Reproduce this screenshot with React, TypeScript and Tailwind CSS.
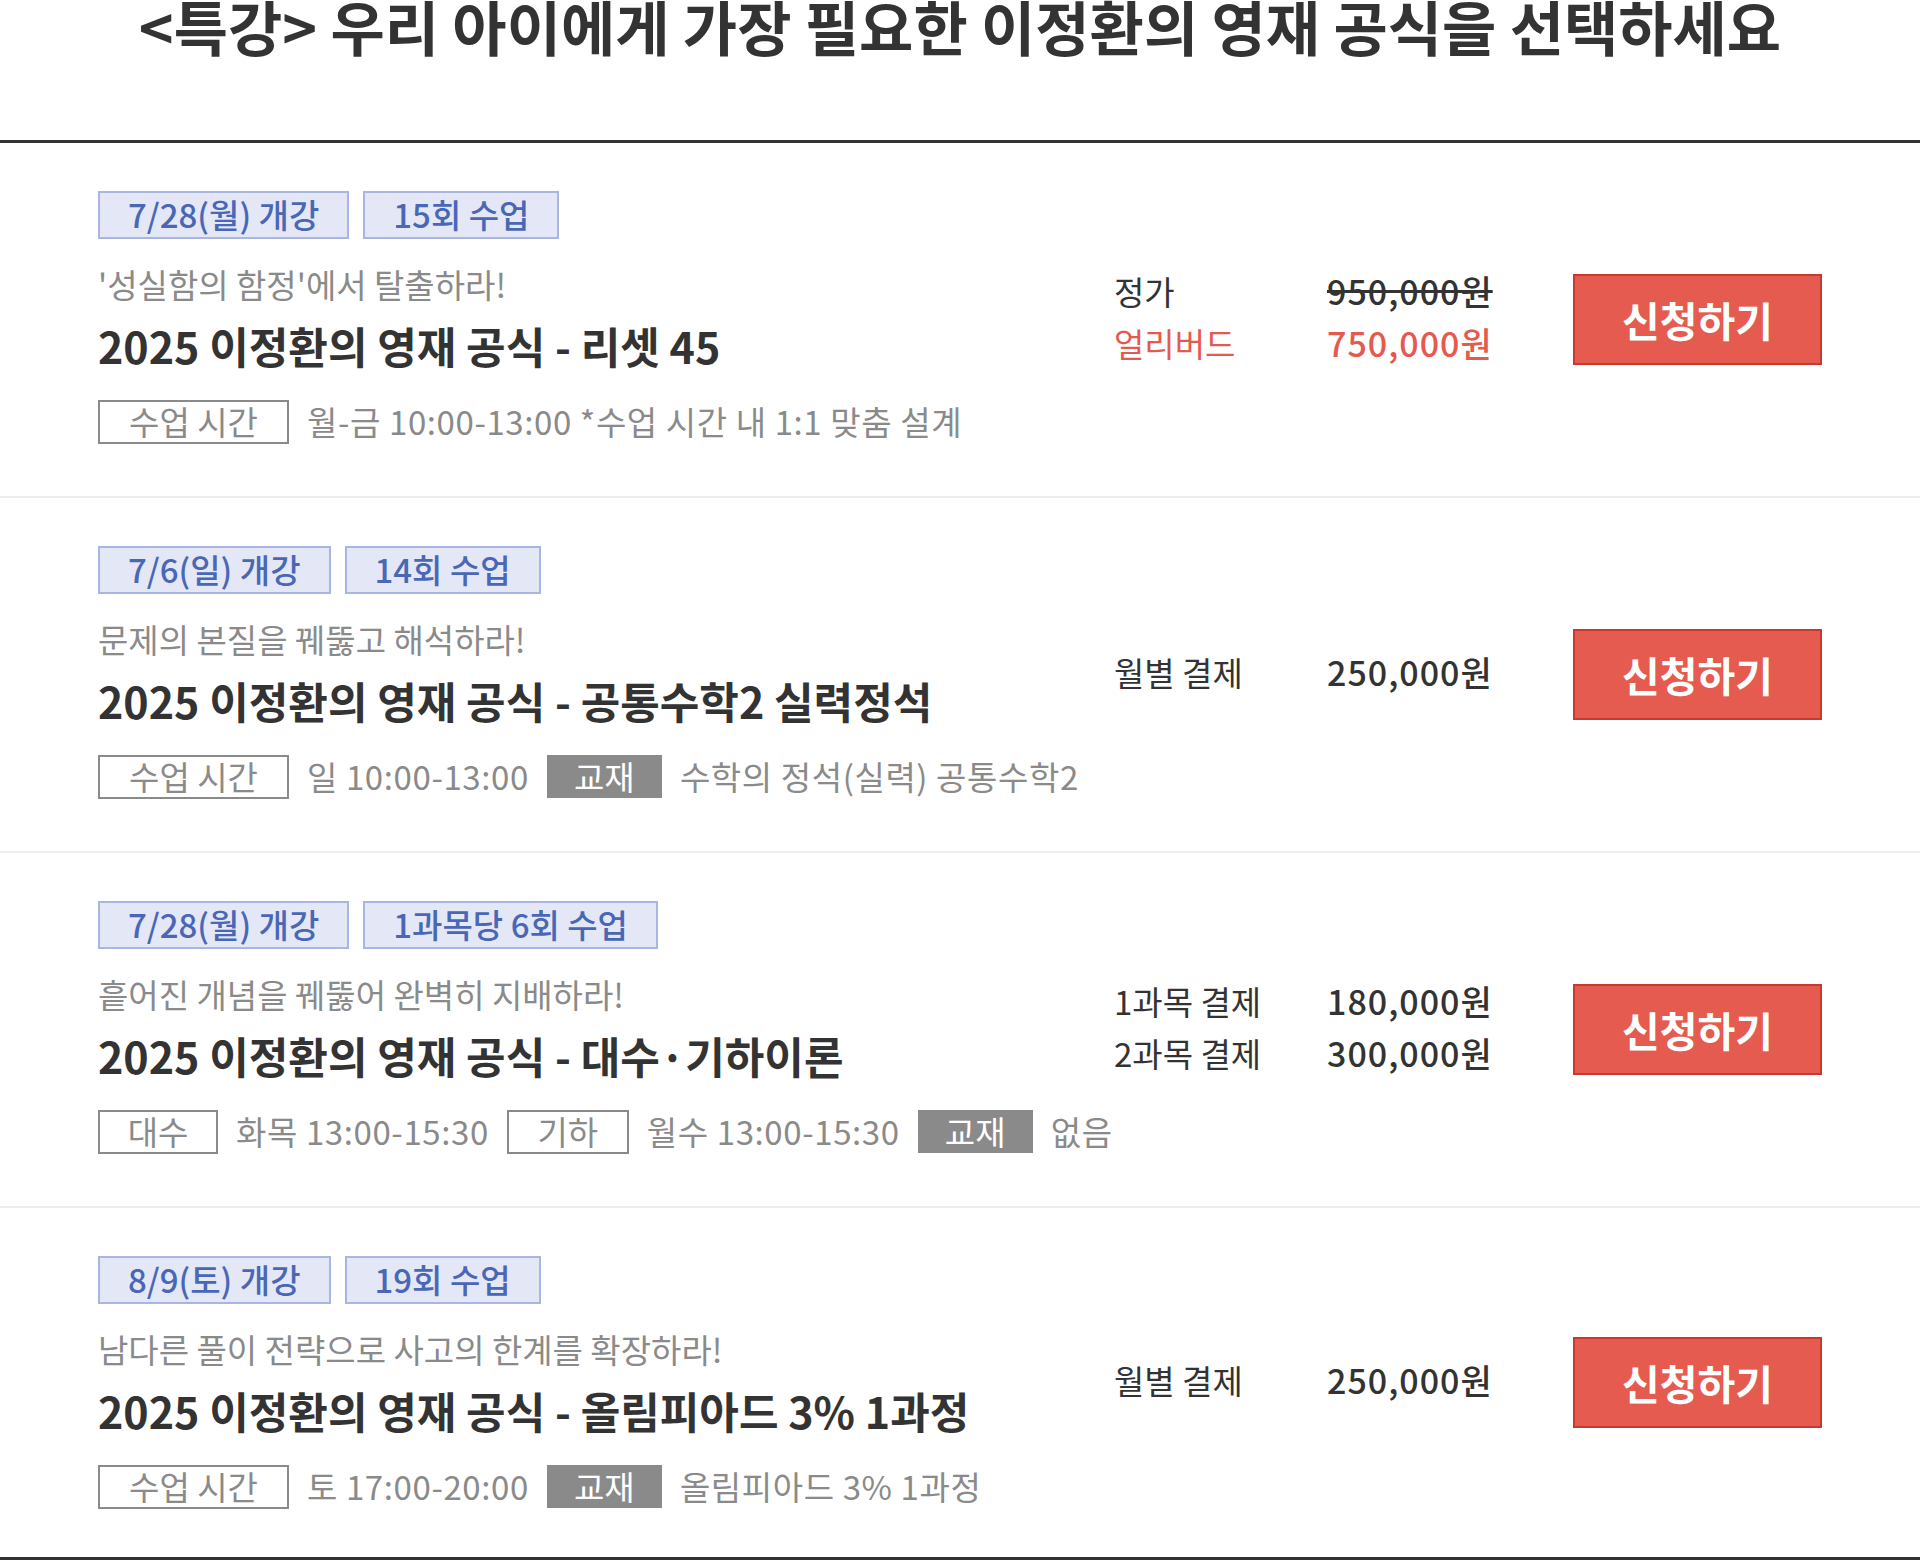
type Detail = { kind: 'box' | 'dark' | 'text'; text: string; w?: string };
type Price = { label: string; value: string; strike?: boolean; red?: boolean };

interface Course {
  badges: string[];
  sub: string;
  title: string;
  details: Detail[];
  prices: Price[];
}

const courses: Course[] = [
  {
    badges: ['7/28(월) 개강', '15회 수업'],
    sub: "'성실함의 함정'에서 탈출하라!",
    title: '2025 이정환의 영재 공식 - 리셋 45',
    details: [
      { kind: 'box', text: '수업 시간', w: 'w-[191px]' },
      { kind: 'text', text: '월-금 10:00-13:00 *수업 시간 내 1:1 맞춤 설계' },
    ],
    prices: [
      { label: '정가', value: '950,000원', strike: true },
      { label: '얼리버드', value: '750,000원', red: true },
    ],
  },
  {
    badges: ['7/6(일) 개강', '14회 수업'],
    sub: '문제의 본질을 꿰뚫고 해석하라!',
    title: '2025 이정환의 영재 공식 - 공통수학2 실력정석',
    details: [
      { kind: 'box', text: '수업 시간', w: 'w-[191px]' },
      { kind: 'text', text: '일 10:00-13:00' },
      { kind: 'dark', text: '교재' },
      { kind: 'text', text: '수학의 정석(실력) 공통수학2' },
    ],
    prices: [{ label: '월별 결제', value: '250,000원' }],
  },
  {
    badges: ['7/28(월) 개강', '1과목당 6회 수업'],
    sub: '흩어진 개념을 꿰뚫어 완벽히 지배하라!',
    title: '2025 이정환의 영재 공식 - 대수·기하이론',
    details: [
      { kind: 'box', text: '대수', w: 'w-[120px]' },
      { kind: 'text', text: '화목 13:00-15:30' },
      { kind: 'box', text: '기하', w: 'w-[122px]' },
      { kind: 'text', text: '월수 13:00-15:30' },
      { kind: 'dark', text: '교재' },
      { kind: 'text', text: '없음' },
    ],
    prices: [
      { label: '1과목 결제', value: '180,000원' },
      { label: '2과목 결제', value: '300,000원' },
    ],
  },
  {
    badges: ['8/9(토) 개강', '19회 수업'],
    sub: '남다른 풀이 전략으로 사고의 한계를 확장하라!',
    title: '2025 이정환의 영재 공식 - 올림피아드 3% 1과정',
    details: [
      { kind: 'box', text: '수업 시간', w: 'w-[191px]' },
      { kind: 'text', text: '토 17:00-20:00' },
      { kind: 'dark', text: '교재' },
      { kind: 'text', text: '올림피아드 3% 1과정' },
    ],
    prices: [{ label: '월별 결제', value: '250,000원' }],
  },
];

function DetailItem({ d }: { d: Detail }) {
  if (d.kind === 'box') {
    return (
      <span
        className={`${d.w} h-[44px] shrink-0 flex items-center justify-center border-2 border-[#8a8a8a] text-[#8a8a8a]`}
      >
        {d.text}
      </span>
    );
  }
  if (d.kind === 'dark') {
    return (
      <span className="w-[115px] h-[43px] shrink-0 flex items-center justify-center bg-[#8a8a8a] text-white">
        {d.text}
      </span>
    );
  }
  return <span className="shrink-0 whitespace-nowrap text-[#8a8a8a] tracking-[0.6px]">{d.text}</span>;
}

function CourseRow({ course, last }: { course: Course; last: boolean }) {
  return (
    <div
      className={`flex items-center px-[98px] ${
        last ? 'h-[349px]' : 'h-[355px] border-b-2 border-[#eeeeee]'
      }`}
    >
      <div className="flex-1 min-w-0 self-start pt-[48px] flex flex-col">
        <div className="flex gap-[14px]">
          {course.badges.map((b) => (
            <span
              key={b}
              className="h-[48px] px-[28px] flex items-center border-2 border-[#aab6e2] bg-[#e4e7f6] text-[#4a67b6] text-[33px] font-medium"
            >
              {b}
            </span>
          ))}
        </div>
        <p className="mt-[25px] text-[33px] leading-[40px] text-[#8a8a8a]">{course.sub}</p>
        <h3 className="mt-[16px] text-[43px] leading-[50px] font-bold text-[#333333]">{course.title}</h3>
        <div className="mt-[27px] flex items-center gap-[18px] text-[33px]">
          {course.details.map((d, i) => (
            <DetailItem key={i} d={d} />
          ))}
        </div>
      </div>

      <div className="w-[459px] shrink-0 mb-[6px] flex flex-col leading-[52px]">
        {course.prices.map((p) => (
          <div key={p.label} className={`flex ${p.red ? 'text-[#e55a4e]' : 'text-[#333333]'}`}>
            <span className="w-[213px] text-[33px]">{p.label}</span>
            <span className={`text-[34px] tracking-[1px] font-medium ${p.strike ? 'line-through' : ''}`}>
              {p.value}
            </span>
          </div>
        ))}
      </div>

      <button className="w-[249px] h-[91px] shrink-0 border-2 border-[#c9392e] bg-[#e65b4f] text-white text-[41px] font-bold">
        신청하기
      </button>
    </div>
  );
}

export default function App() {
  return (
    <div className="w-[1920px] h-[1562px] overflow-hidden bg-white font-['Noto_Sans_CJK_KR','Noto_Sans',sans-serif]">
      <div className="flow-root h-[143px] border-b-[3px] border-[#333333]">
        <h1 className="-mt-[4px] text-center text-[59px] leading-[60px] font-bold text-[#333333]">
          &lt;특강&gt; 우리 아이에게 가장 필요한 이정환의 영재 공식을 선택하세요
        </h1>
      </div>
      <div className="border-b-[3px] border-[#333333]">
        {courses.map((c, i) => (
          <CourseRow key={c.title} course={c} last={i === courses.length - 1} />
        ))}
      </div>
    </div>
  );
}
